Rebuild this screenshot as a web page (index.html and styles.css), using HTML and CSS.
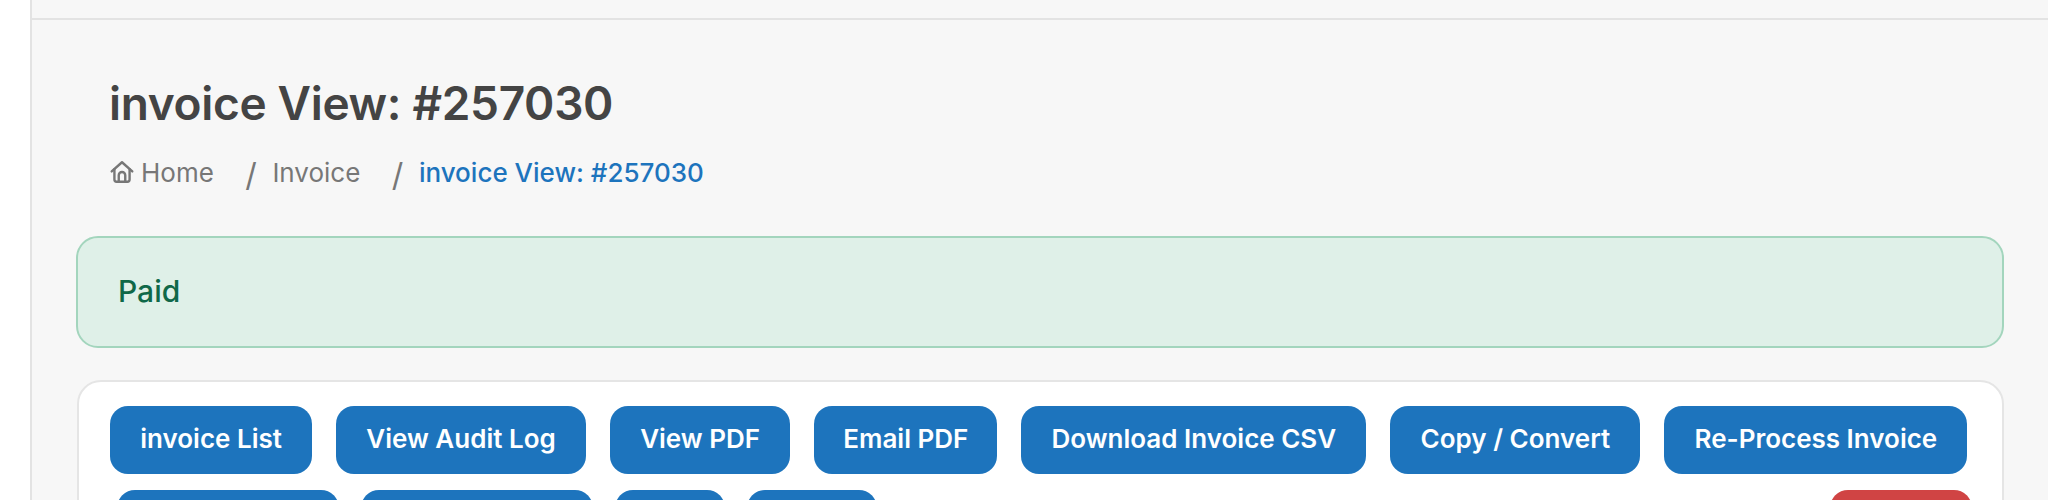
FILE: index.html
```html
<!DOCTYPE html>
<html lang="en">
<head>
<meta charset="utf-8">
<title>invoice View: #257030</title>
<link rel="stylesheet" href="styles.css">
</head>
<body>
<main class="shell">
  <div class="topbar"></div>
  <div class="content">
    <header class="page-head">
      <h1 class="page-title">invoice View: #257030</h1>
      <nav class="crumbs">
        <a class="crumb crumb-home">
          <svg class="home-icon" viewBox="0 0 24 24" fill="none" stroke="currentColor" stroke-width="2.200" stroke-linejoin="round" stroke-linecap="round"><path d="M2.500 11.500 12 3l9.500 8.500"/><path d="M5 9.500V19a2 2 0 0 0 2 2h10a2 2 0 0 0 2-2V9.500"/><path d="M9 21v-6a3 3 0 0 1 6 0v6"/></svg>
          Home
        </a>
        <span class="sep">/</span>
        <a class="crumb">Invoice</a>
        <span class="sep">/</span>
        <a class="crumb crumb-active">invoice View: #257030</a>
      </nav>
    </header>
    <div class="alert-paid">Paid</div>
    <section class="card">
      <div class="btn-row">
        <a class="btn">invoice List</a>
        <a class="btn">View Audit Log</a>
        <a class="btn">View PDF</a>
        <a class="btn btn-tight">Email PDF</a>
        <a class="btn">Download Invoice CSV</a>
        <a class="btn">Copy / Convert</a>
        <a class="btn">Re-Process Invoice</a>
      </div>
      <div class="btn-row btn-row-2">
        <a class="btn btn-a"></a>
        <a class="btn btn-b"></a>
        <a class="btn btn-c"></a>
        <a class="btn btn-d"></a>
        <a class="btn btn-danger"></a>
      </div>
    </section>
  </div>
</main>
</body>
</html>
```
FILE: styles.css
```css
* { box-sizing: border-box; }
html, body { margin: 0; padding: 0; height: 500px; overflow: hidden; background: #fff; }
body { font-family: Inter, "Liberation Sans", sans-serif; padding-left: 30px; }
.shell { height: 100%; background: #f7f7f7; border-left: 2px solid #e3e3e3; overflow: hidden; }
.topbar { height: 20px; border-bottom: 2px solid #e3e3e3; }
.content { padding: 0 44px 0 44px; }
.page-head { padding: 56px 0 0 33px; }
.page-title { margin: 0; font-size: 46px; line-height: 54px; font-weight: 600; color: #444; letter-spacing: -0.33px; }
.crumbs { display: flex; align-items: center; margin-top: 23px; height: 38px; font-size: 26px; color: #777; }
.crumb { display: flex; align-items: center; }
.crumb-active { color: #1d74bd; font-weight: 500; }
.home-icon { width: 26px; height: 26px; margin-right: 6px; }
.sep { margin: 5px 15.5px 0 31.5px; font-size: 32px; line-height: 38px; }
.alert-paid { margin-top: 45px; height: 112px; display: flex; align-items: center; padding: 0 0 2px 40px; background: #dff0e8; border: 2px solid #a3d5bd; border-radius: 22px; color: #0f6848; font-size: 30px; font-weight: 500; }
.card { margin: 32px 0 0 1px; background: #fff; border: 2px solid #e5e5e5; border-radius: 24px; padding: 24px 30px 24px 31px; }
.btn-row { display: flex; gap: 24px; }
.btn-row-2 { gap: 22px; margin-top: 16px; padding-left: 7px; }
.btn { display: flex; align-items: center; justify-content: center; height: 68px; padding: 0 30.2px 4px; background: #1d74bd; color: #fff; border-radius: 18px; font-size: 26px; font-weight: 600; white-space: nowrap; }
.btn-tight { padding: 0 29px 4px; }
.btn-a { width: 222px; }
.btn-b { width: 232px; }
.btn-c { width: 110px; }
.btn-d { width: 130px; }
.btn-danger { width: 142px; margin-left: auto; background: #d04444; }
```
